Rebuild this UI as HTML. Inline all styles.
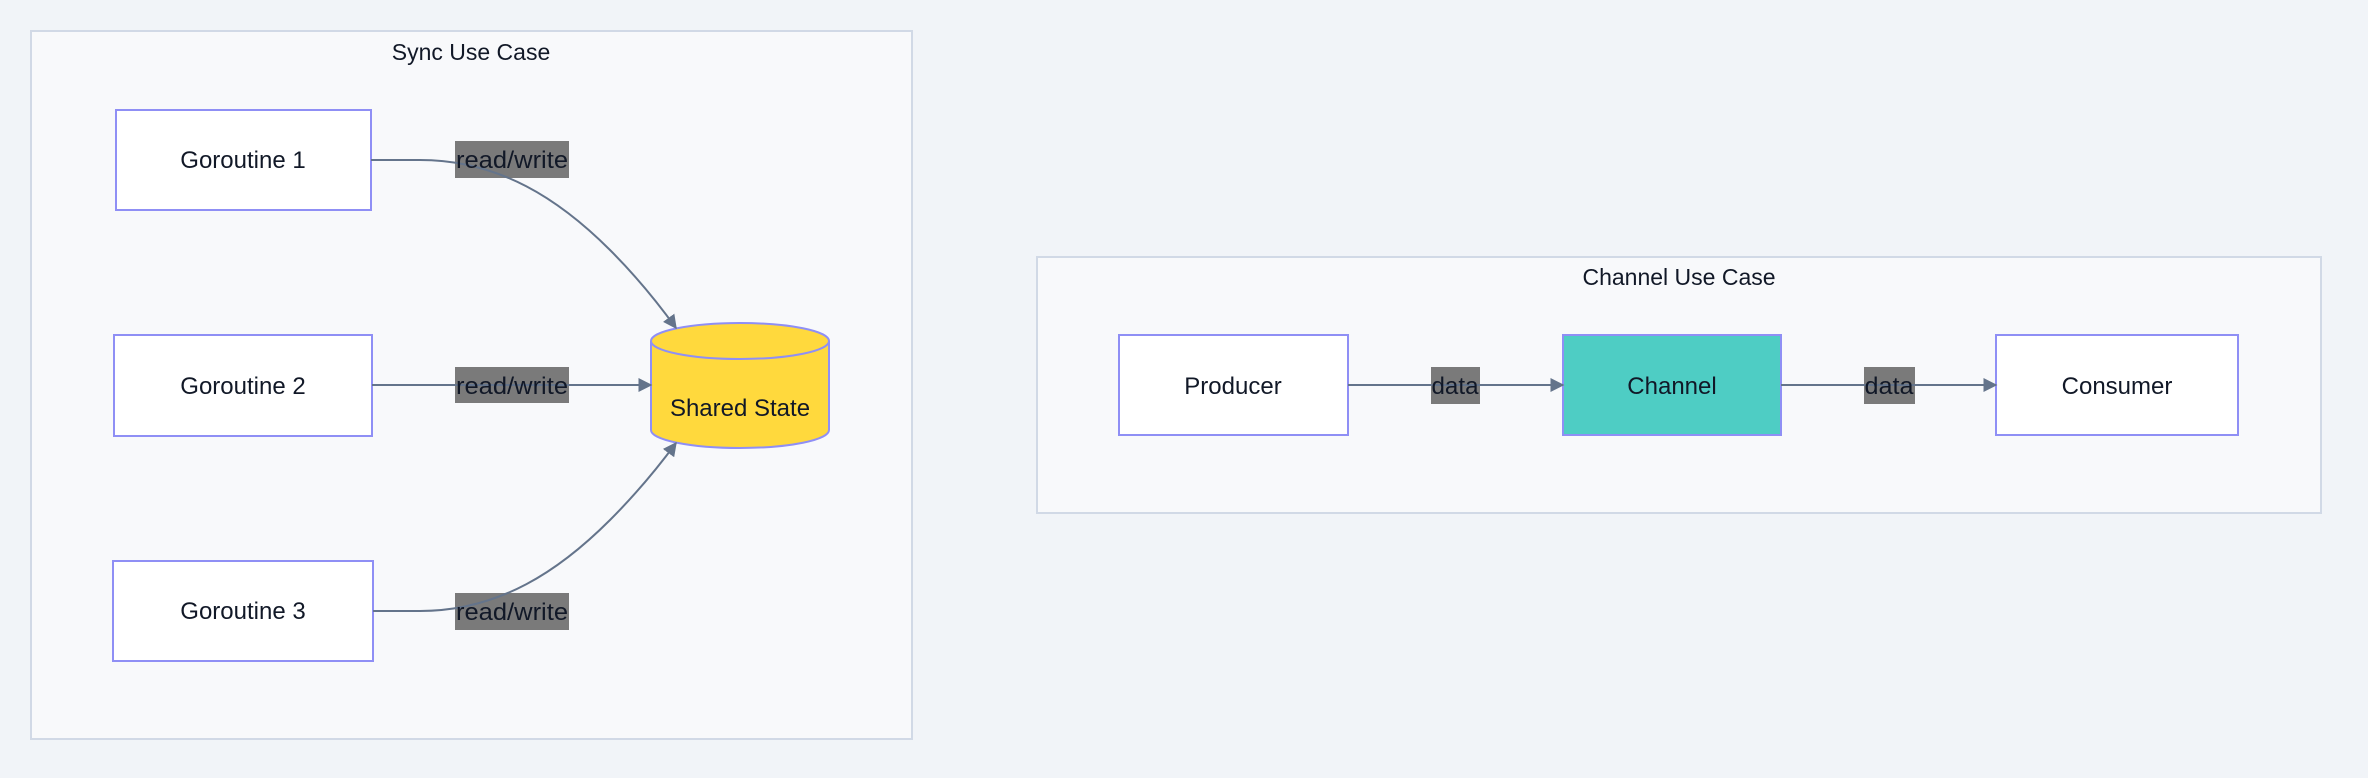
<!DOCTYPE html>
<html><head><style>
html,body{margin:0;padding:0;background:#f1f4f8;}
svg{display:block;font-family:"Liberation Sans",sans-serif;}
</style></head><body>
<svg width="2368" height="778" viewBox="0 0 2368 778">
<defs><marker id="a" viewBox="0 0 10 10" refX="9" refY="5" markerWidth="14" markerHeight="14" orient="auto" markerUnits="userSpaceOnUse"><path d="M0,0 L10,5 L0,10 z" fill="#64748b"/></marker></defs>
<rect x="0" y="0" width="2368" height="778" fill="#f1f4f8"/>
<rect x="31" y="31" width="881" height="708" fill="#f8f9fb" stroke="#d1d9e6" stroke-width="2"/>
<text x="471" y="60" font-size="23" text-anchor="middle" fill="#111827">Sync Use Case</text>
<rect x="1037" y="257" width="1284" height="256" fill="#f8f9fb" stroke="#d1d9e6" stroke-width="2"/>
<text x="1679" y="285" font-size="23" text-anchor="middle" fill="#111827">Channel Use Case</text>

<g fill="#fff" stroke="#8f8ff5" stroke-width="2">
<rect x="116" y="110" width="255" height="100"/>
<rect x="114" y="335" width="258" height="101"/>
<rect x="113" y="561" width="260" height="100"/>
<rect x="1119" y="335" width="229" height="100"/>
<rect x="1563" y="335" width="218" height="100" fill="#4ecdc4"/>
<rect x="1996" y="335" width="242" height="100"/>
</g>
<path d="M651,341 V430 A89,18 0 0 0 829,430 V341" fill="#ffd93d" stroke="#8f8ff5" stroke-width="2"/>
<ellipse cx="740" cy="341" rx="89" ry="18" fill="#ffd93d" stroke="#8f8ff5" stroke-width="2"/>

<g fill="#7a7a7a">
<rect x="455" y="141" width="114" height="37"/>
<rect x="455" y="367" width="114" height="36"/>
<rect x="455" y="593" width="114" height="37"/>
<rect x="1431" y="367" width="49" height="37"/>
<rect x="1864" y="367" width="51" height="37"/>
</g>

<g fill="none" stroke="#64748b" stroke-width="2" marker-end="url(#a)">
<path d="M371,160 L420,160 C500,160 560,200 610,250 Q645,285 676,328"/>
<path d="M372,385 L651,385"/>
<path d="M373,611 L420,611 C500,611 560,570 610,520 Q645,485 676,443"/>
<path d="M1348,385 L1563,385"/>
<path d="M1781,385 L1996,385"/>
</g>

<g font-size="24" fill="#111827" text-anchor="middle">
<text x="243" y="168">Goroutine 1</text>
<text x="243" y="394">Goroutine 2</text>
<text x="243" y="619">Goroutine 3</text>
<text x="740" y="416">Shared State</text>
<text x="1233" y="394">Producer</text>
<text x="1672" y="394">Channel</text>
<text x="2117" y="394">Consumer</text>
<text x="512" y="168" textLength="112" lengthAdjust="spacingAndGlyphs">read/write</text>
<text x="512" y="394" textLength="112" lengthAdjust="spacingAndGlyphs">read/write</text>
<text x="512" y="620" textLength="112" lengthAdjust="spacingAndGlyphs">read/write</text>
<text x="1455" y="394" textLength="47" lengthAdjust="spacingAndGlyphs">data</text>
<text x="1889" y="394" textLength="49" lengthAdjust="spacingAndGlyphs">data</text>
</g>
</svg>
</body></html>
